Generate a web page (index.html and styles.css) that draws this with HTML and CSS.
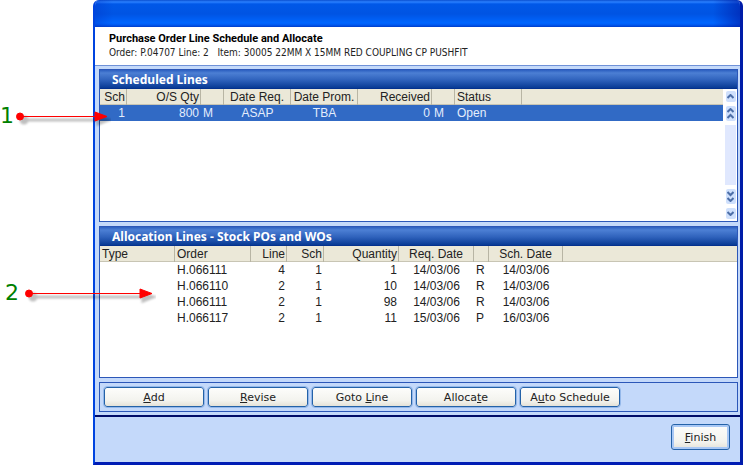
FILE: index.html
```html
<!DOCTYPE html>
<html lang="en">
<head>
  <meta charset="UTF-8">
  <meta name="viewport" content="width=device-width, initial-scale=1.0">
  <title>Purchase Order Line Schedule and Allocate</title>
  <link rel="stylesheet" href="styles.css">
</head>
<body>
  <main class="window">
    <div class="titlebar"></div>

    <header class="heading">
      <h1>Purchase Order Line Schedule and Allocate</h1>
      <p>Order: P.04707 Line: 2 &nbsp; Item: 30005 22MM X 15MM RED COUPLING CP PUSHFIT</p>
    </header>

    <div class="content">
      <section class="panel">
        <h2>Scheduled Lines</h2>
        <div class="panel-body">
          <table class="grid">
            <colgroup>
              <col class="w27"><col class="w74"><col class="w23"><col class="w67"><col class="w67">
              <col class="w74"><col class="w23"><col class="w67"><col>
            </colgroup>
            <thead>
              <tr>
                <th class="num">Sch</th><th class="num">O/S Qty</th><th></th><th class="mid">Date Req.</th><th class="mid">Date Prom.</th>
                <th class="num">Received</th><th></th><th>Status</th><th></th>
              </tr>
            </thead>
            <tbody>
              <tr class="selected">
                <td class="num">1</td><td class="num">800</td><td>M</td><td class="mid">ASAP</td><td class="mid">TBA</td>
                <td class="num">0</td><td>M</td><td>Open</td><td></td>
              </tr>
            </tbody>
          </table>
          <div class="scroller">
            <button type="button" aria-label="Line up"><svg width="7" height="5"><path d="M0.5 4L3.5 1L6.5 4"/></svg></button>
            <button type="button" class="page" aria-label="Page up"><svg width="7" height="11"><path d="M0.5 4L3.5 1L6.5 4M0.5 10L3.5 7L6.5 10"/></svg></button>
            <div class="track"></div>
            <button type="button" class="page" aria-label="Page down"><svg width="7" height="11"><path d="M0.5 1L3.5 4L6.5 1M0.5 7L3.5 10L6.5 7"/></svg></button>
            <button type="button" aria-label="Line down"><svg width="7" height="5"><path d="M0.5 1L3.5 4L6.5 1"/></svg></button>
          </div>
        </div>
      </section>

      <section class="panel">
        <h2>Allocation Lines - Stock POs and WOs</h2>
        <div class="panel-body">
          <table class="grid">
            <colgroup>
              <col class="w75"><col class="w76"><col class="w36"><col class="w37"><col class="w75">
              <col class="w75"><col class="w15"><col class="w74"><col>
            </colgroup>
            <thead>
              <tr>
                <th>Type</th><th>Order</th><th class="num">Line</th><th class="num">Sch</th><th class="num">Quantity</th>
                <th class="mid">Req. Date</th><th></th><th class="mid">Sch. Date</th><th></th>
              </tr>
            </thead>
            <tbody>
              <tr><td></td><td>H.066111</td><td class="num">4</td><td class="num">1</td><td class="num">1</td><td class="mid">14/03/06</td><td>R</td><td class="mid">14/03/06</td><td></td></tr>
              <tr><td></td><td>H.066110</td><td class="num">2</td><td class="num">1</td><td class="num">10</td><td class="mid">14/03/06</td><td>R</td><td class="mid">14/03/06</td><td></td></tr>
              <tr><td></td><td>H.066111</td><td class="num">2</td><td class="num">1</td><td class="num">98</td><td class="mid">14/03/06</td><td>R</td><td class="mid">14/03/06</td><td></td></tr>
              <tr><td></td><td>H.066117</td><td class="num">2</td><td class="num">1</td><td class="num">11</td><td class="mid">15/03/06</td><td>P</td><td class="mid">16/03/06</td><td></td></tr>
            </tbody>
          </table>
        </div>
      </section>

      <div class="actions">
        <button type="button"><u>A</u>dd</button>
        <button type="button"><u>R</u>evise</button>
        <button type="button">Goto <u>L</u>ine</button>
        <button type="button">Alloca<u>t</u>e</button>
        <button type="button">A<u>u</u>to Schedule</button>
      </div>
    </div>

    <footer class="footer">
      <button type="button" class="finish"><u>F</u>inish</button>
    </footer>
  </main>

  <!-- numbered callouts -->
  <div class="callout callout-one">
    <span>1</span>
    <svg width="96" height="24" viewBox="0 -5 96 24">
      <g class="shadow"><path d="M8 11H82"/><circle cx="9" cy="11" r="3"/><path d="M83 8L93 11L83 15Z"/></g>
      <g class="arrow"><path d="M5 7.5H82"/><circle cx="5" cy="7.5" r="3.5"/><path d="M80 3L92 7.5L80 12Z"/></g>
    </svg>
  </div>
  <div class="callout callout-two">
    <span>2</span>
    <svg width="132" height="24" viewBox="0 -5 132 24">
      <g class="shadow"><path d="M8 11H118"/><circle cx="9" cy="11" r="3"/><path d="M119 8L129 11L119 15Z"/></g>
      <g class="arrow"><path d="M5 7.5H118"/><circle cx="5" cy="7.5" r="3.5"/><path d="M116 3L128 7.5L116 12Z"/></g>
    </svg>
  </div>
</body>
</html>
```
FILE: styles.css
```css
* {
  box-sizing: border-box;
}
body {
  margin: 0;
  padding-left: 93px;
  background-color: #fff;
  font-family: "Liberation Sans", Arial, sans-serif;
  font-size: 12px;
  color: #222;
}
h1, h2, p {
  margin: 0;
}
button {
  margin: 0;
  padding: 0;
}
.window {
  display: flex;
  flex-direction: column;
  min-height: 100vh;
  border: solid #0044e0;
  border-width: 0 3px 3px 2px;
  border-right-color: #001ca8;
  border-bottom-color: #001cb4;
  border-radius: 6px 6px 0 0;
  background-color: #c4d9fa;
  overflow: hidden;
}
.titlebar {
  height: 27px;
  margin: 0 -3px 0 -2px;
  background: linear-gradient(to right, rgba(0, 50, 200, 0.4), transparent 20px, transparent 620px, rgba(0, 30, 170, 0.7)),
    linear-gradient(#0a4fd0, #2a80ff 2px, #0058e8 4px, #0054e3 14px, #0066ff 23px, #0058f0 25px, #003dc8);
}
.heading {
  padding: 5px 14px;
  height: 38px;
  background-color: #fff;
  font-family: "DejaVu Sans Condensed", Tahoma, sans-serif;
  font-size: 10px;
  line-height: 14px;
  color: #222;
}
.heading h1 {
  font-family: Roboto, Tahoma, sans-serif;
  font-size: 11px;
  font-weight: bold;
  color: #000;
}
.content {
  display: flex;
  flex-direction: column;
  flex: 1;
  gap: 4px;
  padding: 3px 2px 3px 4px;
  border-top: 1px solid #6f91d8;
  border-bottom: 2px solid #000c68;
  background-color: #c4d9fa;
}
.panel {
  display: flex;
  flex-direction: column;
  flex: 1 0 0px;
  border: 1px solid #2c57b8;
  background-color: #fff;
}
.panel h2 {
  height: 19px;
  padding-left: 12px;
  background: linear-gradient(#2c5fc0, #4c7fd4 3px, #2f62bc 10px, #083a94 18px, #002888);
  color: #fff;
  font-family: "Noto Sans", "Trebuchet MS", sans-serif;
  font-size: 12px;
  line-height: 20px;
}
.panel-body {
  display: flex;
  flex: 1;
  align-items: flex-start;
}
.grid {
  flex: 1;
  width: 100%;
  table-layout: fixed;
  border-collapse: separate;
  border-spacing: 0;
}
.grid th,
.grid td {
  height: 16px;
  padding: 0 2px;
  font-weight: normal;
  line-height: 16px;
  text-align: left;
  white-space: nowrap;
}
.grid th {
  border-right: 1px solid #b8b5a4;
  background-color: #ebe8d8;
  box-shadow: inset 0 -1px #c8c5b4;
}
.grid th:last-child {
  border-right: 0;
}
.grid .num {
  padding-right: 1px;
  text-align: right;
}
.grid td.num {
  padding-right: 2px;
}
.grid .mid {
  padding: 0;
  text-align: center;
}
.grid .selected td {
  background-color: #316ac5;
  color: #e4edfc;
}
.w15 { width: 15px; }
.w23 { width: 23px; }
.w27 { width: 27px; }
.w36 { width: 36px; }
.w37 { width: 37px; }
.w67 { width: 67px; }
.w74 { width: 74px; }
.w75 { width: 75px; }
.w76 { width: 76px; }
.scroller {
  display: flex;
  flex-direction: column;
  align-self: stretch;
  align-items: center;
  gap: 4px;
  width: 14px;
  padding: 2px 0 2px 1px;
}
.scroller button {
  display: flex;
  align-items: center;
  justify-content: center;
  width: 10px;
  height: 11px;
  border: 0;
  border-radius: 2px;
  background-color: #cfe0fc;
}
.scroller .page {
  height: 15px;
}
.scroller path {
  fill: none;
  stroke: #4d6fa8;
  stroke-width: 2;
}
.track {
  flex: 1;
  width: 11px;
  background-color: #e0e8fe;
}
.actions {
  display: flex;
  gap: 4px;
  padding: 4px;
  border: 1px solid #2c57b8;
}
.actions button,
.finish {
  border: 1px solid #2462a8;
  border-radius: 3px;
  background: linear-gradient(#fdfdfb, #f3f3ee 70%, #e4e2d8);
  color: #222;
  font-family: "DejaVu Sans", Verdana, sans-serif;
  font-size: 11px;
}
.actions button {
  width: 100px;
  height: 20px;
  outline: 1px solid #94b8ea;
}
.footer {
  display: flex;
  justify-content: flex-end;
  padding: 7px 10px 12px;
}
.finish {
  width: 59px;
  height: 26px;
  box-shadow: inset 0 0 0 2px #a9c8f5;
}
.callout {
  position: absolute;
  display: flex;
  align-items: center;
  color: #008000;
  font-family: "DejaVu Sans", Verdana, sans-serif;
  font-size: 22px;
  line-height: 24px;
}
.callout-one {
  top: 104px;
  left: 0;
}
.callout-two {
  top: 281px;
  left: 5px;
}
.callout span {
  width: 15px;
}
.callout-two span {
  width: 19px;
}
.arrow {
  fill: #f00;
  stroke: #f00;
  stroke-width: 1;
}
.shadow {
  fill: #000;
  stroke: #000;
  stroke-width: 3;
  opacity: 0.25;
  filter: blur(1px);
}
```
